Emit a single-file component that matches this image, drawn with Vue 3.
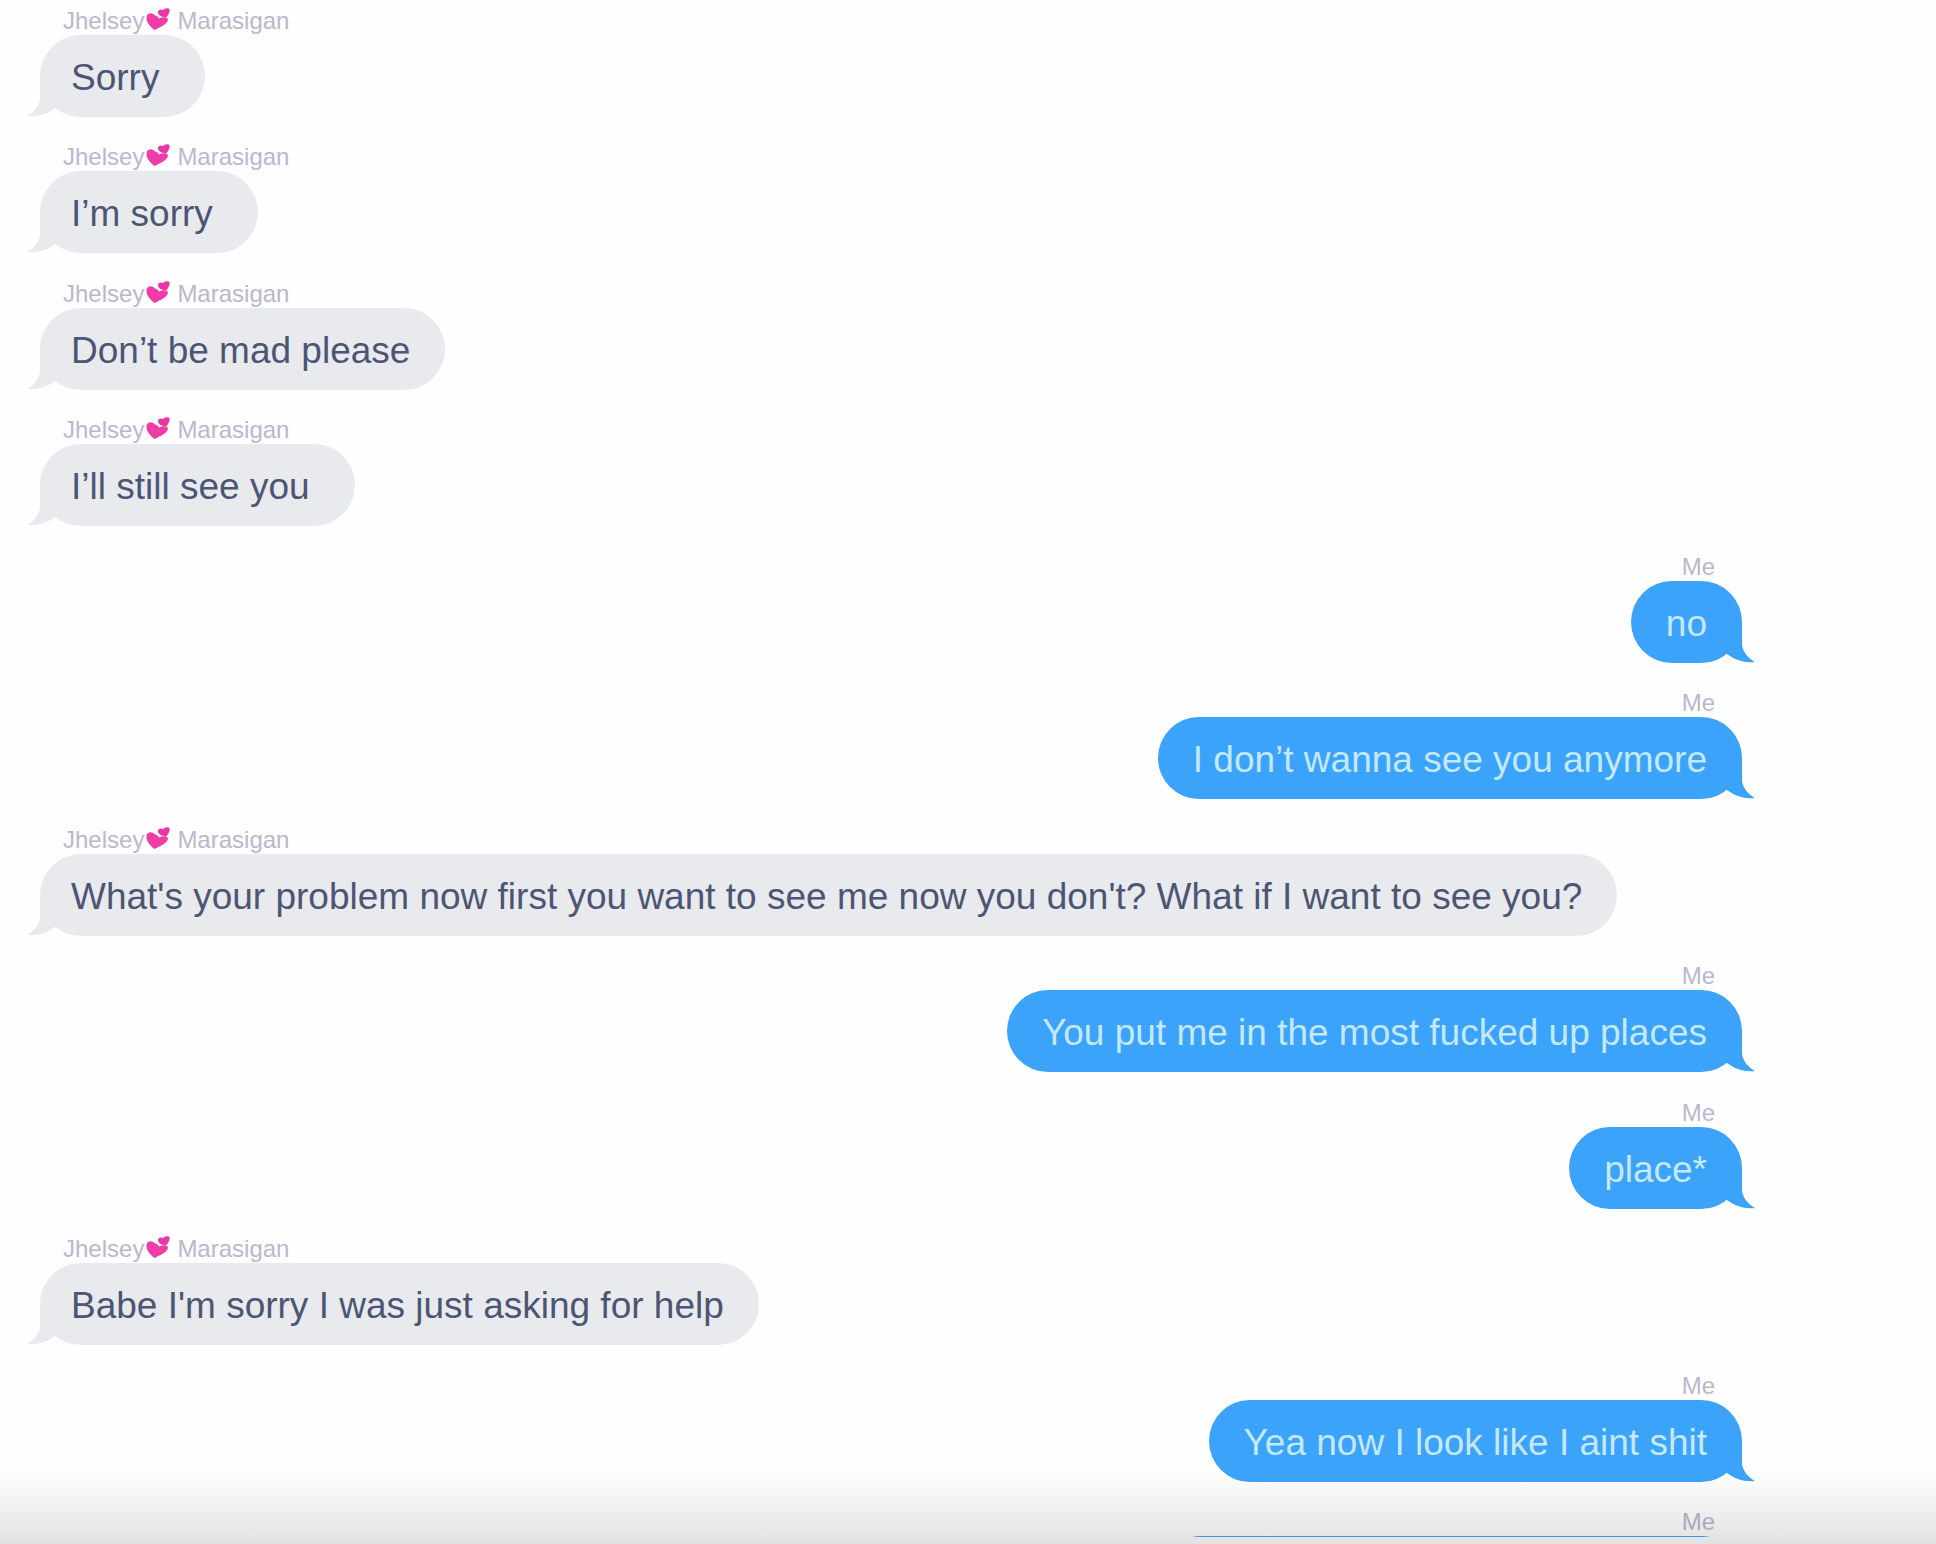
<script setup>
import { ref } from "vue";

const contact = { first: "Jhelsey", last: "Marasigan" };

const messages = ref([
  { id: 1, mine: false, text: "Sorry " },
  { id: 2, mine: false, text: "I’m sorry " },
  { id: 3, mine: false, text: "Don’t be mad please" },
  { id: 4, mine: false, text: "I’ll still see you " },
  { id: 5, mine: true, text: "no" },
  { id: 6, mine: true, text: "I don’t wanna see you anymore" },
  { id: 7, mine: false, text: "What's your problem now first you want to see me now you don't? What if I want to see you?" },
  { id: 8, mine: true, text: "You put me in the most fucked up places" },
  { id: 9, mine: true, text: "place*" },
  { id: 10, mine: false, text: "Babe I'm sorry I was just asking for help" },
  { id: 11, mine: true, text: "Yea now I look like I aint shit" },
  { id: 12, mine: true, text: "" },
]);
</script>

<template>
  <main class="screen">
    <ul class="thread">
      <li v-for="message in messages" :key="message.id" class="message" :class="{ mine: message.mine }">
        <!-- Sender -->
        <div v-if="message.mine" class="sender">Me</div>
        <div v-else class="sender">
          <span>{{ contact.first }}</span>
          <svg class="hearts" viewBox="0 0 24 22" aria-hidden="true">
            <path class="heart-small" d="M20.500 9C17 9.500 12.500 8 12 4.500C11.800 2 14.500 0.800 17 2.200C18 0 23 -0.500 23.600 1.500C24 4 22.500 7 20.500 9Z" />
            <path class="heart-big" d="M8.500 22C4 18.500 0 14 0.500 9C1 5 6 4 9 7.500C10.500 7.500 12 8.500 13 10.500C16.500 9 21.500 8.500 22 11.500C21.500 16.500 14 19 8.500 22Z" />
          </svg>
          <span>{{ contact.last }}</span>
        </div>

        <!-- Bubble -->
        <div class="bubble" :class="{ empty: !message.text }">
          <p>{{ message.text }}</p>
          <svg class="tail" viewBox="0 0 42 42" aria-hidden="true">
            <path d="M14 0V24C13 31 8 37 1 41C12 42 21 39 29 33L41 14V0Z" />
          </svg>
        </div>
      </li>
    </ul>
    <div class="fade"></div>
  </main>
</template>

<style>
body {
  margin: 0;
  background: #fefefe;
}
</style>

<style scoped>
.screen {
  position: relative;
  height: 100vh;
  overflow: hidden;
  box-sizing: border-box;
  padding-bottom: 7px;
  background: #fefefe;
  font-family: "Liberation Sans", Arial, sans-serif;
}

.thread {
  height: 100%;
  overflow: hidden;
  box-sizing: border-box;
  margin: 0;
  padding: 7px 194px 0 40px;
  list-style: none;
}

.message {
  display: flex;
  flex-direction: column;
  align-items: flex-start;
  margin-bottom: 26px;
}

.message:nth-child(even) {
  margin-bottom: 27px;
}

.message.mine {
  align-items: flex-end;
}

/* Sender */
.sender {
  display: flex;
  align-items: center;
  margin: 0 27px 1px 23px;
  font-size: 24px;
  line-height: 27px;
  color: #b9b8ce;
}

.hearts {
  width: 24px;
  height: 22px;
  margin: 0 7px 4px 2px;
}

.heart-small {
  fill: #e636a8;
}

.heart-big {
  fill: #f03ca6;
}

/* Bubble */
.bubble {
  position: relative;
  padding: 22px 35px 18px 31px;
  border-radius: 41px;
  background: #e9eaee;
  color: #4c5674;
}

.bubble p {
  margin: 0;
  min-height: 42px;
  font-size: 37px;
  line-height: 42px;
  white-space: pre-wrap;
}

.mine .bubble {
  padding: 22px 35px 18px;
  background: #3ba3f9;
  color: #c3e8ff;
}

.bubble.empty {
  width: 512px;
}

.tail {
  position: absolute;
  left: -14px;
  bottom: 0;
  width: 42px;
  height: 42px;
  fill: #e9eaee;
}

.mine .tail {
  left: auto;
  right: -14px;
  transform: scaleX(-1);
  fill: #3ba3f9;
}

/* Bottom shade */
.fade {
  position: absolute;
  left: 0;
  right: 0;
  bottom: 0;
  height: 72px;
  background: linear-gradient(rgba(0, 0, 0, 0), rgba(0, 0, 0, 0.11));
  pointer-events: none;
}
</style>
